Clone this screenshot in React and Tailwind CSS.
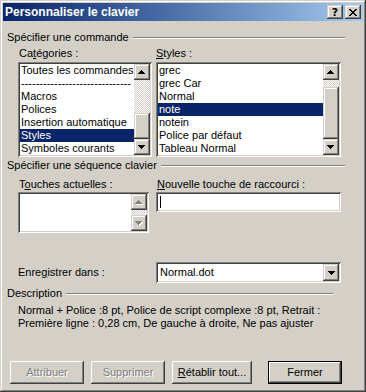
const raisedBtn =
  "shadow-[inset_-1px_-1px_#404040,inset_1px_1px_#ffffff,inset_-2px_-2px_#808080,inset_2px_2px_#d4d0c8]";
const raisedSmall =
  "shadow-[inset_-1px_-1px_#404040,inset_1px_1px_#d4d0c8,inset_-2px_-2px_#808080,inset_2px_2px_#ffffff]";
const sunken =
  "shadow-[inset_1px_1px_#808080,inset_-1px_-1px_#ffffff,inset_2px_2px_#404040,inset_-2px_-2px_#d4d0c8]";
const checker =
  "bg-[image:repeating-conic-gradient(#d4d0c8_0%_25%,#ffffff_0%_50%)] bg-[length:2px_2px]";

function Arrow({ dir, disabled }) {
  const rows = dir === "up" ? [[3, 1], [2, 3], [1, 5], [0, 7]] : [[0, 7], [1, 5], [2, 3], [3, 1]];
  const draw = (color, off) =>
    rows.map(([x, w], i) => (
      <rect key={color + i} x={x + off} y={i + off} width={w} height={1} fill={color} />
    ));
  return (
    <div className={`w-[16px] h-[16px] bg-[#d4d0c8] flex items-center justify-center shrink-0 ${raisedSmall}`}>
      <svg width="8" height="5" viewBox="0 0 8 5" shapeRendering="crispEdges">
        {disabled ? (
          <>
            {draw("#ffffff", 1)}
            {draw("#808080", 0)}
          </>
        ) : (
          draw("#000000", 0)
        )}
      </svg>
    </div>
  );
}

function ScrollBar({ spacer, thumb, disabled }) {
  return (
    <div className="w-[16px] flex flex-col shrink-0">
      <Arrow dir="up" disabled={disabled} />
      <div className={`flex-1 flex flex-col ${checker}`}>
        {thumb ? (
          <>
            <div style={{ height: spacer }} className="shrink-0" />
            <div style={{ height: thumb }} className={`shrink-0 bg-[#d4d0c8] ${raisedSmall}`} />
          </>
        ) : null}
      </div>
      <Arrow dir="down" disabled={disabled} />
    </div>
  );
}

function ListBox({ width, items, selected, spacer, thumb }) {
  return (
    <div className={`bg-white p-[2px] flex h-[95px] ${sunken}`} style={{ width }}>
      <div className="flex-1 flex flex-col min-w-0">
        {items.map((it, i) => (
          <div
            key={i}
            className={`h-[13px] pl-[1px] whitespace-nowrap ${
              i === selected ? "bg-[#0a246a] text-white" : ""
            }`}
          >
            {it}
          </div>
        ))}
      </div>
      <ScrollBar spacer={spacer} thumb={thumb} />
    </div>
  );
}

function GroupHeader({ label, mr, className = "" }) {
  return (
    <div className={`flex items-center h-[13px] ${className}`}>
      <span className="whitespace-nowrap">{label}</span>
      <div className="flex-1 ml-[4px] h-[2px] border-t border-t-[#808080] border-b border-b-white" style={{ marginRight: mr }} />
    </div>
  );
}

function Btn({ children, width, disabled, isDefault }) {
  const shadow = isDefault
    ? "shadow-[inset_0_0_0_1px_#000000,inset_-2px_-2px_#404040,inset_2px_2px_#ffffff,inset_-3px_-3px_#808080,inset_3px_3px_#d4d0c8]"
    : raisedBtn;
  return (
    <div
      className={`h-[23px] bg-[#d4d0c8] flex items-center justify-center shrink-0 ${shadow} ${
        disabled ? "text-[#808080] [text-shadow:1px_1px_0_#ffffff]" : "text-black"
      }`}
      style={{ width }}
    >
      {children}
    </div>
  );
}

export default function App() {
  return (
    <div className="w-[366px] h-[392px] bg-[#d4d0c8] p-[3px] flex flex-col font-['Liberation_Sans',Arial,sans-serif] text-[11px] leading-[13px] text-black shadow-[inset_-1px_-1px_#404040,inset_1px_1px_#d4d0c8,inset_-2px_-2px_#808080,inset_2px_2px_#ffffff]">
      {/* Title bar */}
      <div className="h-[18px] flex items-center bg-linear-to-r from-[#0a246a] to-[#a6caf0] pl-[2px] pr-[2px]">
        <span className="flex-1 text-white font-bold text-[12px] leading-[14px] whitespace-nowrap">Personnaliser le clavier</span>
        <div className={`w-[16px] h-[14px] bg-[#d4d0c8] flex items-center justify-center ${raisedSmall}`}>
          <span className="font-bold text-[11px] leading-[11px] font-['DejaVu_Sans',sans-serif] text-black">?</span>
        </div>
        <div className={`w-[16px] h-[14px] ml-[2px] bg-[#d4d0c8] flex items-center justify-center ${raisedSmall}`}>
          <svg width="8" height="7" viewBox="0 0 8 7" shapeRendering="crispEdges">
            <path d="M0 0h2v1h-2zM6 0h2v1h-2zM1 1h2v1h-2zM5 1h2v1h-2zM2 2h4v1h-4zM3 3h2v1h-2zM2 4h4v1h-4zM1 5h2v1h-2zM5 5h2v1h-2zM0 6h2v1h-2zM6 6h2v1h-2z" fill="#000" />
          </svg>
        </div>
      </div>

      <div className="flex flex-col pl-[4px]">
        <GroupHeader label="Spécifier une commande" mr={18} className="mt-[10px]" />

        <div className="flex mt-[3px] h-[13px] ml-[12px]">
          <div className="w-[137px]">
            Ca<u>t</u>égories :
          </div>
          <div>
            <u>S</u>tyles :
          </div>
        </div>

        <div className="flex mt-[2px] ml-[11px] gap-[4px]">
          <ListBox
            width={134}
            items={[
              "Toutes les commandes",
              "------------------------------",
              "Macros",
              "Polices",
              "Insertion automatique",
              "Styles",
              "Symboles courants",
            ]}
            selected={5}
            spacer={33}
            thumb={26}
          />
          <ListBox
            width={185}
            items={["grec", "grec Car", "Normal", "note", "notein", "Police par défaut", "Tableau Normal"]}
            selected={3}
            spacer={7}
            thumb={52}
          />
        </div>

        <GroupHeader label="Spécifier une séquence clavier" mr={18} className="mt-[2px]" />

        <div className="flex mt-[6px] h-[13px] ml-[12px]">
          <div className="w-[138px]">
            T<u>o</u>uches actuelles :
          </div>
          <div>
            <u>N</u>ouvelle touche de raccourci :
          </div>
        </div>

        <div className="flex mt-[1px] ml-[11px] items-start">
          <div className={`w-[131px] h-[41px] bg-white p-[2px] flex ${sunken}`}>
            <div className="flex-1" />
            <ScrollBar disabled />
          </div>
          <div className={`ml-[7px] w-[185px] h-[20px] bg-white p-[2px] flex items-center ${sunken}`}>
            <div className="ml-[2px] w-[1px] h-[12px] bg-black" />
          </div>
        </div>

        <div className="flex mt-[29px] ml-[11px] items-center">
          <div className="w-[138px]">
            Enre<u>g</u>istrer dans :
          </div>
          <div className={`w-[185px] h-[21px] bg-white p-[2px] flex items-center ${sunken}`}>
            <span className="flex-1 pl-[2px]">Normal.dot</span>
            <div className={`w-[16px] h-[17px] bg-[#d4d0c8] flex items-center justify-center ${raisedSmall}`}>
              <svg width="7" height="4" viewBox="0 0 7 4" shapeRendering="crispEdges">
                <path d="M0 0h7v1h-7zM1 1h5v1h-5zM2 2h3v1h-3zM3 3h1v1h-1z" fill="#000" />
              </svg>
            </div>
          </div>
        </div>

        <GroupHeader label="Description" mr={30} className="mt-[4px]" />

        <div className="mt-[4px] ml-[11px] leading-[13px]">
          <div className="whitespace-nowrap">Normal + Police :8 pt, Police de script complexe :8 pt, Retrait :</div>
          <div className="whitespace-nowrap">Première ligne : 0,28 cm, De gauche à droite, Ne pas ajuster</div>
        </div>

        <div className="flex mt-[31px] ml-[3px]">
          <Btn width={74} disabled>Attribuer</Btn>
          <div className="w-[7px]" />
          <Btn width={74} disabled>Supprimer</Btn>
          <div className="w-[7px]" />
          <Btn width={80}>
            <span>
              <u>R</u>établir tout...
            </span>
          </Btn>
          <div className="w-[16px]" />
          <Btn width={74} isDefault>Fermer</Btn>
        </div>
      </div>
    </div>
  );
}
